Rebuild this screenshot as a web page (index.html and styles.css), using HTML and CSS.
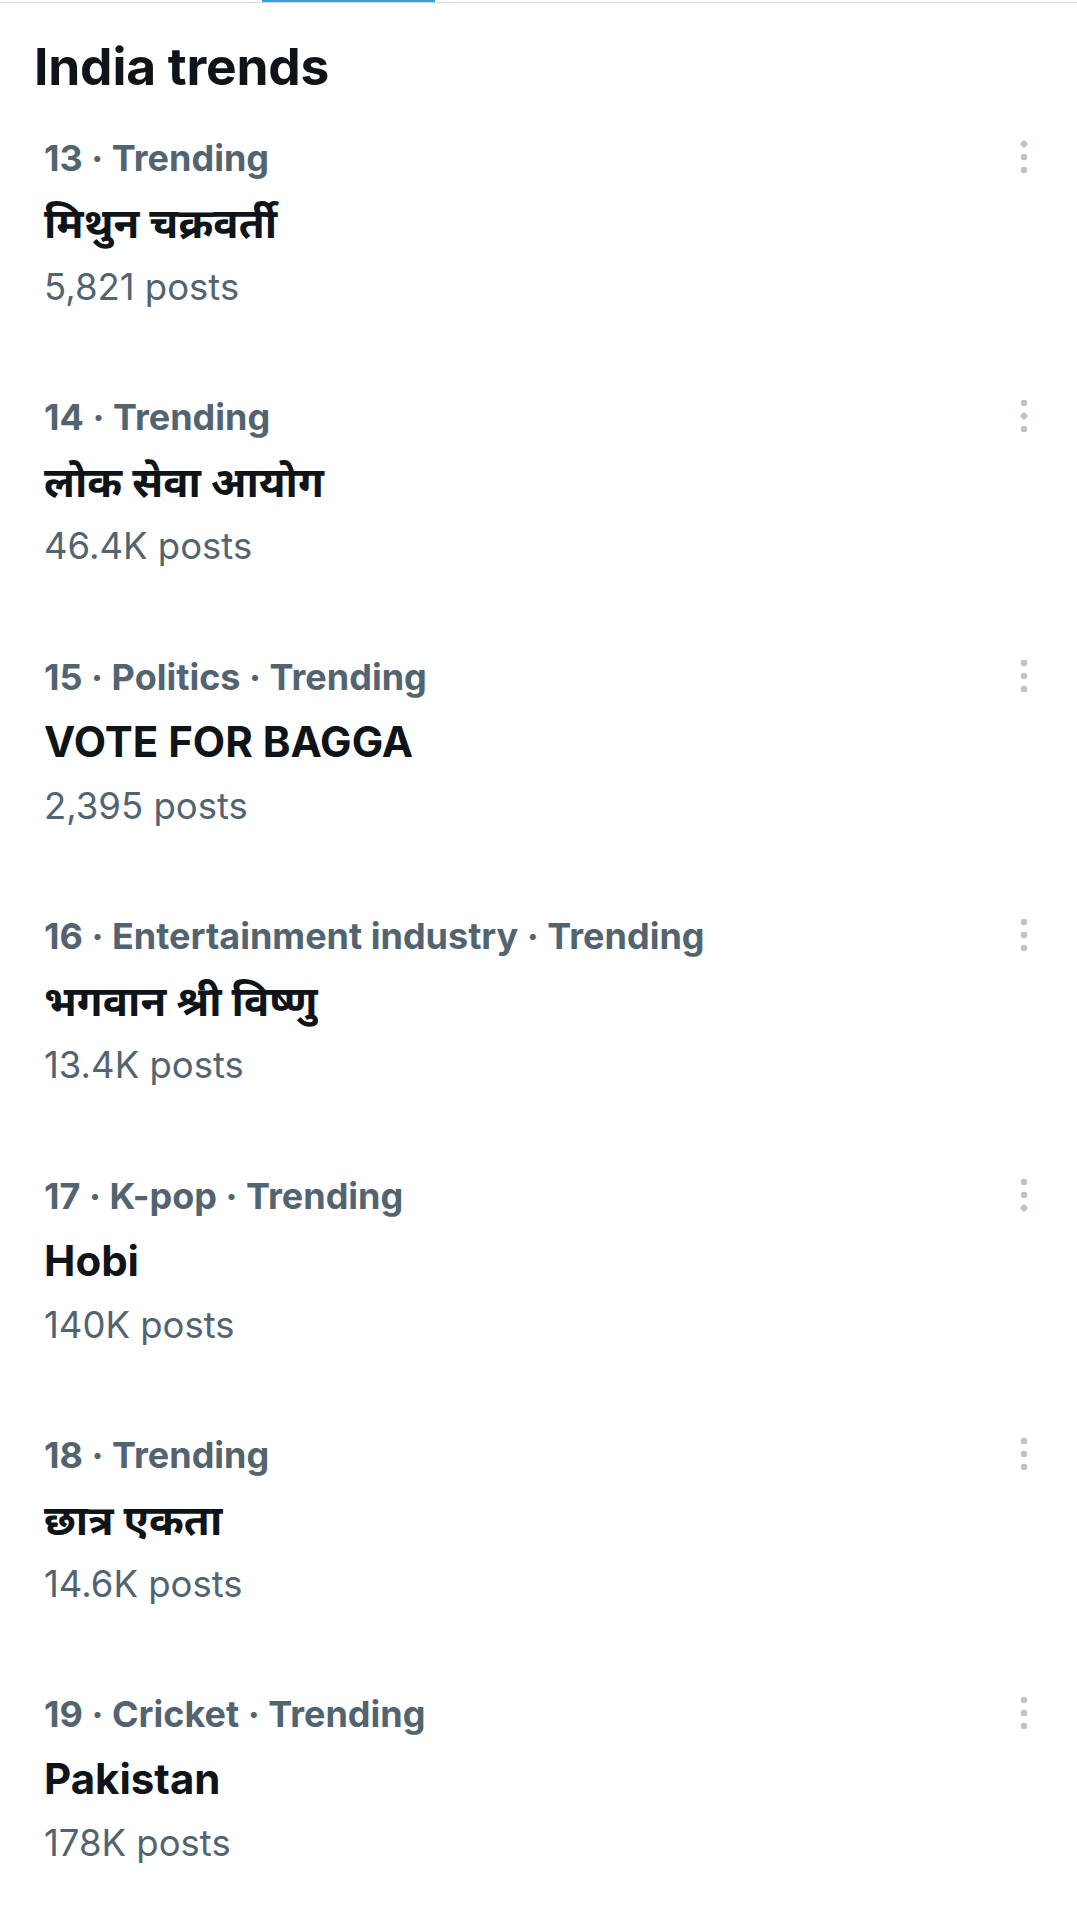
FILE: index.html
```html
<!DOCTYPE html>
<html lang="en">
<head>
<meta charset="utf-8">
<title>India trends</title>
<link rel="stylesheet" href="styles.css">
</head>
<body>
<div class="tabbar"><div class="tab-indicator"></div></div>
<h2 class="heading">India trends</h2>
<ul class="trends">
  <li class="trend">
    <div class="trend-text">
      <div class="meta">13 · Trending</div>
      <div class="title" lang="hi">मिथुन चक्रवर्ती</div>
      <div class="posts">5,821 posts</div>
    </div>
    <button class="more" aria-label="More"><svg viewBox="0 0 20 34" width="20" height="34"><circle cx="10" cy="4" r="3.2"/><circle cx="10" cy="17" r="3.2"/><circle cx="10" cy="30" r="3.2"/></svg></button>
  </li>
  <li class="trend">
    <div class="trend-text">
      <div class="meta">14 · Trending</div>
      <div class="title" lang="hi">लोक सेवा आयोग</div>
      <div class="posts">46.4K posts</div>
    </div>
    <button class="more" aria-label="More"><svg viewBox="0 0 20 34" width="20" height="34"><circle cx="10" cy="4" r="3.2"/><circle cx="10" cy="17" r="3.2"/><circle cx="10" cy="30" r="3.2"/></svg></button>
  </li>
  <li class="trend">
    <div class="trend-text">
      <div class="meta">15 · Politics · Trending</div>
      <div class="title">VOTE FOR BAGGA</div>
      <div class="posts">2,395 posts</div>
    </div>
    <button class="more" aria-label="More"><svg viewBox="0 0 20 34" width="20" height="34"><circle cx="10" cy="4" r="3.2"/><circle cx="10" cy="17" r="3.2"/><circle cx="10" cy="30" r="3.2"/></svg></button>
  </li>
  <li class="trend">
    <div class="trend-text">
      <div class="meta">16 · Entertainment industry · Trending</div>
      <div class="title" lang="hi">भगवान श्री विष्णु</div>
      <div class="posts">13.4K posts</div>
    </div>
    <button class="more" aria-label="More"><svg viewBox="0 0 20 34" width="20" height="34"><circle cx="10" cy="4" r="3.2"/><circle cx="10" cy="17" r="3.2"/><circle cx="10" cy="30" r="3.2"/></svg></button>
  </li>
  <li class="trend">
    <div class="trend-text">
      <div class="meta">17 · K-pop · Trending</div>
      <div class="title">Hobi</div>
      <div class="posts">140K posts</div>
    </div>
    <button class="more" aria-label="More"><svg viewBox="0 0 20 34" width="20" height="34"><circle cx="10" cy="4" r="3.2"/><circle cx="10" cy="17" r="3.2"/><circle cx="10" cy="30" r="3.2"/></svg></button>
  </li>
  <li class="trend">
    <div class="trend-text">
      <div class="meta">18 · Trending</div>
      <div class="title" lang="hi">छात्र एकता</div>
      <div class="posts">14.6K posts</div>
    </div>
    <button class="more" aria-label="More"><svg viewBox="0 0 20 34" width="20" height="34"><circle cx="10" cy="4" r="3.2"/><circle cx="10" cy="17" r="3.2"/><circle cx="10" cy="30" r="3.2"/></svg></button>
  </li>
  <li class="trend">
    <div class="trend-text">
      <div class="meta">19 · Cricket · Trending</div>
      <div class="title">Pakistan</div>
      <div class="posts">178K posts</div>
    </div>
    <button class="more" aria-label="More"><svg viewBox="0 0 20 34" width="20" height="34"><circle cx="10" cy="4" r="3.2"/><circle cx="10" cy="17" r="3.2"/><circle cx="10" cy="30" r="3.2"/></svg></button>
  </li>
</ul>
</body>
</html>
```
FILE: styles.css
```css
html, body {
  margin: 0;
  padding: 0;
  background: #ffffff;
}
body {
  font-family: "Inter", "Noto Sans", "DejaVu Sans", sans-serif;
  color: #0f1419;
  width: 1077px;
  overflow: hidden;
}
.tabbar {
  display: flex;
  height: 2px;
  padding-left: 262px;
  border-bottom: 1px solid #d4dbe0;
}
.tab-indicator {
  width: 173px;
  height: 2px;
  background: #3b9fdc;
}
.heading {
  margin: 31px 0 0 0;
  padding-left: 34px;
  font-size: 51.5px;
  line-height: 65px;
  font-weight: 700;
  letter-spacing: -0.2px;
  color: #0f1419;
}
.trends {
  list-style: none;
  margin: 0;
  padding: 0;
}
.trend {
  display: flex;
  justify-content: space-between;
  align-items: flex-start;
  height: 259.4px;
  box-sizing: border-box;
  padding: 37px 43px 0 44px;
}
.trend-text {
  display: flex;
  flex-direction: column;
}
.meta {
  font-size: 36px;
  line-height: 44px;
  font-weight: 700;
  color: #536471;
}
.title {
  margin-top: 17px;
  font-size: 42px;
  line-height: 52px;
  font-weight: 700;
  color: #0f1419;
}
.posts {
  margin-top: 16px;
  font-size: 36.5px;
  line-height: 44px;
  font-weight: 400;
  color: #536471;
}
.more {
  border: 0;
  background: none;
  padding: 0;
  margin: 4px 0 0 0;
  display: flex;
}
.more svg {
  display: block;
  fill: #b9c4cd;
}
```
